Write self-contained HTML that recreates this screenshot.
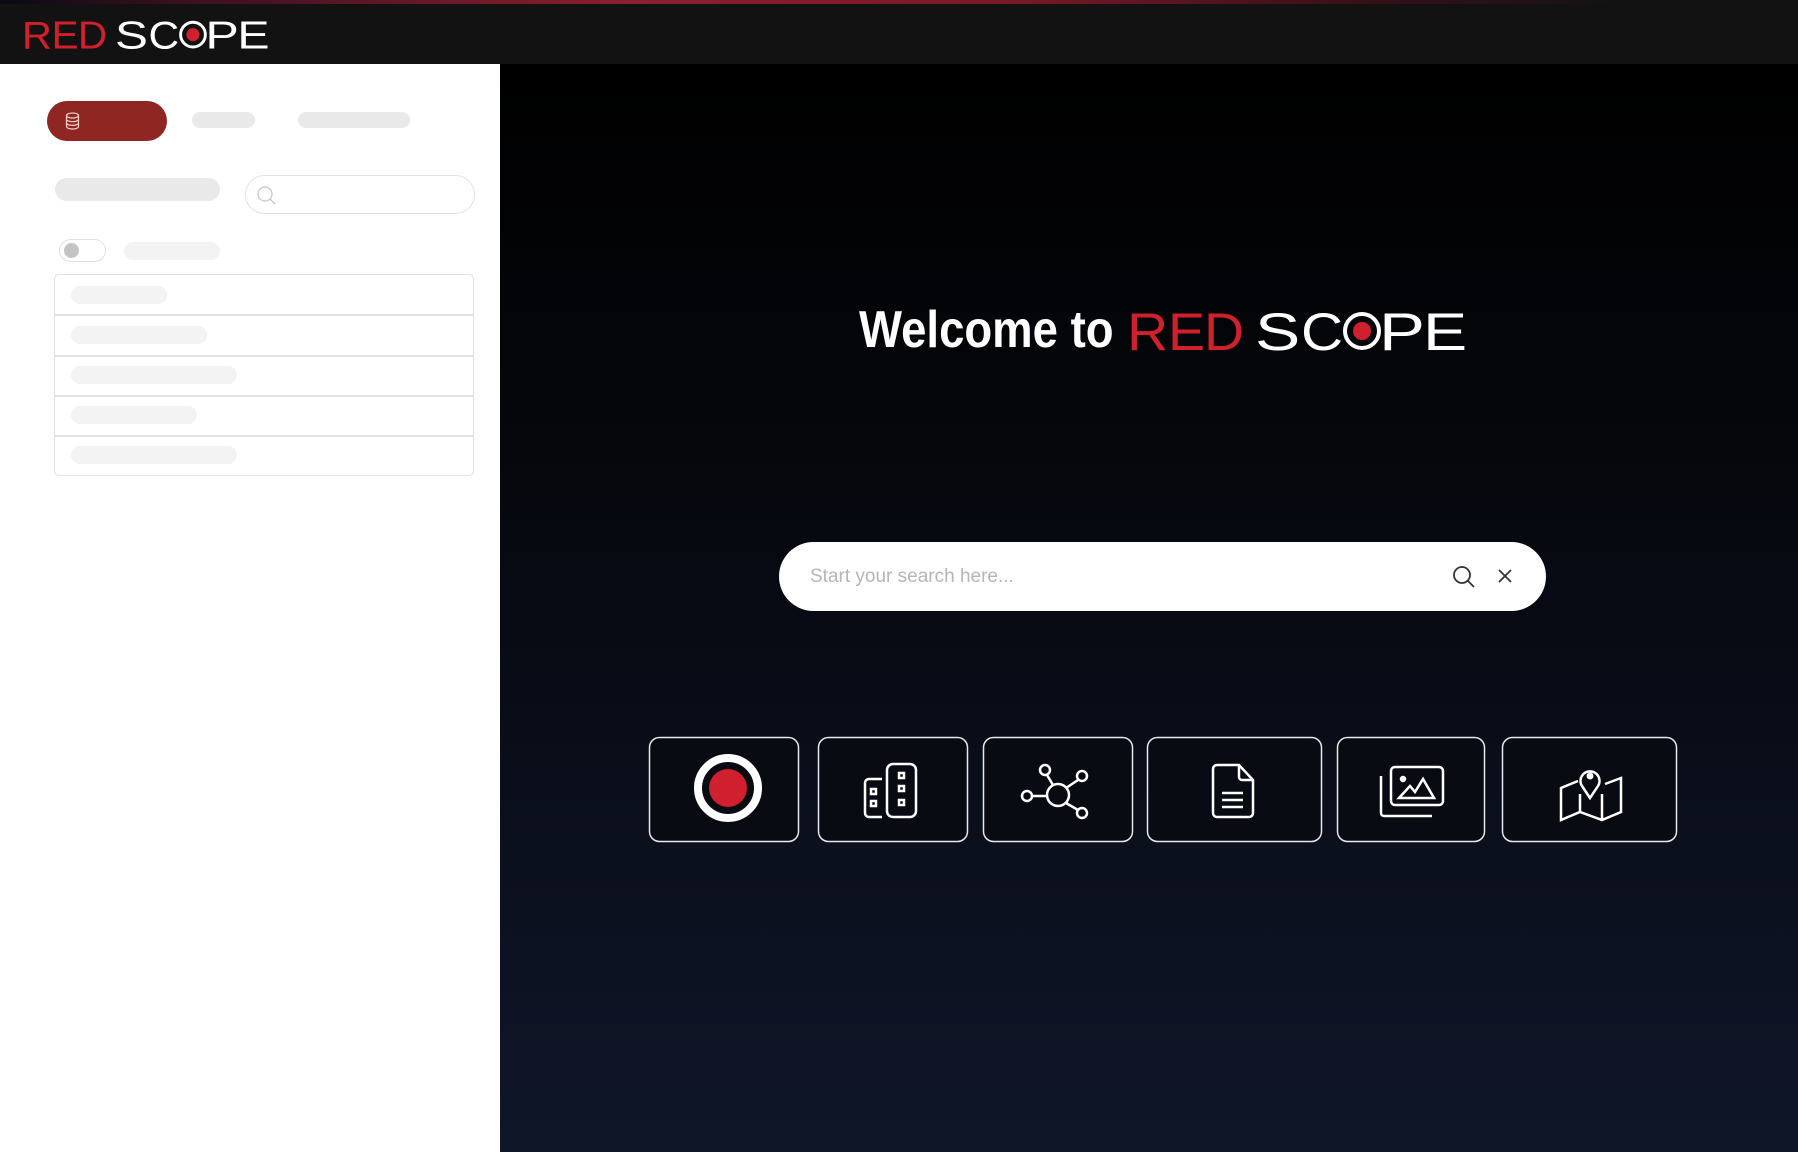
<!DOCTYPE html>
<html><head><meta charset="utf-8"><style>
*{margin:0;padding:0;box-sizing:border-box}
html,body{width:1798px;height:1152px;overflow:hidden;background:#000;font-family:"Liberation Sans",sans-serif}
.hdr{position:absolute;left:0;top:0;width:1798px;height:64px;background:#121212}
.glow{position:absolute;left:0;top:0;width:1798px;height:4px;background:linear-gradient(90deg,#0a0a14 0%,#3a1020 10%,#8a2030 35%,#7a1a2a 55%,#3a1018 75%,#121212 90%)}
.side{position:absolute;left:0;top:64px;width:500px;height:1088px;background:#fff}
.main{position:absolute;left:500px;top:64px;width:1298px;height:1088px;background:linear-gradient(180deg,#000 0%,#05070c 35%,#0a0e1a 65%,#0f1629 100%)}
.a{position:absolute}
.g{background:#e9e9e9;border-radius:12px}
.l{background:#f3f3f3;border-radius:12px}
.welcome{position:absolute;left:859px;top:300px;font-size:52px;font-weight:bold;color:#fff;white-space:nowrap;line-height:60px;transform:scaleX(0.875);transform-origin:0 0}
.search{position:absolute;left:779px;top:542px;width:767px;height:69px;background:#fff;border-radius:35px}
.ph{position:absolute;left:31px;top:24px;font-size:19px;color:#b5b5b5}
</style></head><body>
<div class="hdr"></div><div class="glow"></div>
<svg class="a" style="left:24px;top:20px" width="244" height="30" viewBox="0 0 335 41" font-family="Liberation Sans" font-size="53">
<g fill="#d0202e"><text transform="translate(-3,39) scale(1.08,1)">R</text><text transform="translate(38,39) scale(1.05,1)">E</text><text transform="translate(74,39) scale(1.05,1)">D</text></g>
<g fill="#fff"><text transform="translate(125,39) scale(1.28,1)">S</text><text transform="translate(171,39) scale(1.1,1)">C</text><text transform="translate(249,39) scale(1.3,1)">P</text><text transform="translate(293,39) scale(1.25,1)">E</text></g>
<circle cx="232" cy="20" r="17" fill="none" stroke="#fff" stroke-width="4"/><circle cx="232" cy="20" r="9" fill="#d0202e"/>
</svg>
<div class="side">
<div class="a" style="left:47px;top:37px;width:120px;height:40px;background:#8f2622;border-radius:20px">
<svg class="a" style="left:18px;top:11px" width="15" height="18" viewBox="0 0 15 18" fill="none" stroke="#f3d0cc" stroke-width="1.2"><ellipse cx="7.5" cy="3.5" rx="6" ry="2.5"/><path d="M1.5 3.5v11c0 1.4 2.7 2.5 6 2.5s6-1.1 6-2.5v-11M1.5 7.2c0 1.4 2.7 2.5 6 2.5s6-1.1 6-2.5M1.5 10.9c0 1.4 2.7 2.5 6 2.5s6-1.1 6-2.5"/></svg></div>
<div class="a g" style="left:192px;top:48px;width:63px;height:16px;border-radius:8px"></div>
<div class="a g" style="left:298px;top:48px;width:112px;height:16px;border-radius:8px"></div>
<div class="a g" style="left:55px;top:114px;width:165px;height:23px"></div>
<div class="a" style="left:245px;top:111px;width:230px;height:39px;border:1.5px solid #e2e2e2;border-radius:20px">
<svg class="a" style="left:8px;top:7px" width="24" height="24" viewBox="0 0 24 24" fill="none" stroke="#c8c8c8" stroke-width="1.3"><circle cx="11" cy="11" r="7"/><path d="M16 16l5 5"/></svg></div>
<div class="a" style="left:59px;top:175px;width:47px;height:23px;border:1.5px solid #e2e2e2;border-radius:12px"><div class="a" style="left:4px;top:3px;width:15px;height:15px;border-radius:50%;background:#c4c4c4"></div></div>
<div class="a l" style="left:124px;top:178px;width:96px;height:18px;border-radius:9px"></div>
<div class="a" style="left:54px;top:210px;width:420px;height:202px;border:1.5px solid #e2e2e2;border-radius:5px;overflow:hidden">
<div class="a" style="left:0;top:39px;width:100%;height:1.5px;background:#e2e2e2"></div>
<div class="a" style="left:0;top:80px;width:100%;height:1.5px;background:#e2e2e2"></div>
<div class="a" style="left:0;top:120px;width:100%;height:1.5px;background:#e2e2e2"></div>
<div class="a" style="left:0;top:160px;width:100%;height:1.5px;background:#e2e2e2"></div>
<div class="a l" style="left:16px;top:11px;width:96px;height:18px;border-radius:9px"></div>
<div class="a l" style="left:16px;top:51px;width:136px;height:18px;border-radius:9px"></div>
<div class="a l" style="left:16px;top:91px;width:166px;height:18px;border-radius:9px"></div>
<div class="a l" style="left:16px;top:131px;width:126px;height:18px;border-radius:9px"></div>
<div class="a l" style="left:16px;top:171px;width:166px;height:18px;border-radius:9px"></div>
</div>
</div>
<div class="main"></div>
<div class="welcome">Welcome to</div>
<svg class="a" style="left:1130px;top:310px" width="335" height="41" viewBox="0 0 335 41" font-family="Liberation Sans" font-size="53">
<g fill="#d0202e"><text transform="translate(-3,40) scale(1.08,1)">R</text><text transform="translate(38,40) scale(1.05,1)">E</text><text transform="translate(74,40) scale(1.05,1)">D</text></g>
<g fill="#fff"><text transform="translate(125,40) scale(1.28,1)">S</text><text transform="translate(171,40) scale(1.1,1)">C</text><text transform="translate(249,40) scale(1.3,1)">P</text><text transform="translate(293,40) scale(1.25,1)">E</text></g>
<circle cx="232" cy="21" r="17" fill="none" stroke="#fff" stroke-width="4"/><circle cx="232" cy="21" r="9" fill="#d0202e"/>
</svg>
<div class="search"><div class="ph">Start your search here...</div>
<svg class="a" style="left:672px;top:22px" width="26" height="26" viewBox="0 0 26 26" fill="none" stroke="#333" stroke-width="1.8"><circle cx="11" cy="11" r="8"/><path d="M17 17l6 6"/></svg>
<svg class="a" style="left:717px;top:25px" width="18" height="18" viewBox="0 0 18 18" fill="none" stroke="#333" stroke-width="1.8"><path d="M3 3l12 12M15 3L3 15"/></svg>
</div>
<svg class="a" style="left:0;top:0" width="1798" height="1152" viewBox="0 0 1798 1152" fill="none" stroke="#e8e8ee" stroke-width="1.5">
<rect x="649.5" y="737.5" width="149" height="104" rx="10" fill="#080b12"/>
<rect x="818.5" y="737.5" width="149" height="104" rx="10" fill="#080b12"/>
<rect x="983.5" y="737.5" width="149" height="104" rx="10" fill="#080b12"/>
<rect x="1147.5" y="737.5" width="174" height="104" rx="10" fill="#080b12"/>
<rect x="1337.5" y="737.5" width="147" height="104" rx="10" fill="#080b12"/>
<rect x="1502.5" y="737.5" width="174" height="104" rx="10" fill="#080b12"/>
<circle cx="728" cy="788" r="30" stroke="#fff" stroke-width="8"/><circle cx="728" cy="788" r="19" fill="#d0202e" stroke="none"/>
<g stroke="#fff" stroke-width="2.5">
<path d="M882 779h-13a4 4 0 0 0-4 4v30a4 4 0 0 0 4 4h13"/>
<rect x="887" y="764" width="29" height="53" rx="6"/>
<rect x="871" y="789" width="5" height="5"/><rect x="871" y="801" width="5" height="5"/>
<rect x="899" y="773" width="5" height="5"/><rect x="899" y="786" width="5" height="5"/><rect x="899" y="800" width="5" height="5"/>
<circle cx="1058" cy="795" r="11"/><circle cx="1045" cy="770" r="5"/><circle cx="1082" cy="776" r="5"/><circle cx="1027" cy="796" r="5"/><circle cx="1082" cy="813" r="5"/>
<path d="M1047 775l6 10M1078 780l-12 8M1032 796h15M1066 803l12 7"/>
<path d="M1217 765h22l14 15v33a4 4 0 0 1-4 4h-32a4 4 0 0 1-4-4v-44a4 4 0 0 1 4-4z"/>
<path d="M1239 765v12a3 3 0 0 0 3 3h11M1222 793h21M1222 800h21M1222 807h21"/>
<rect x="1391" y="767" width="52" height="38" rx="4"/>
<path d="M1381 776v37a3 3 0 0 0 3 3h48"/>
<circle cx="1403" cy="779" r="2" fill="#fff"/>
<path d="M1399 798l11-12 5 6 8-13 11 19z"/>
<path d="M1590 798l-8-12a9.5 9.5 0 1 1 16 0z"/><circle cx="1590" cy="776" r="2.2" fill="#fff"/>
<path d="M1578 781l-17 7v32l19-8 22 8 19-8v-34l-16 6M1580 794v18M1602 794v26"/>
</g>
</svg>
</body></html>
